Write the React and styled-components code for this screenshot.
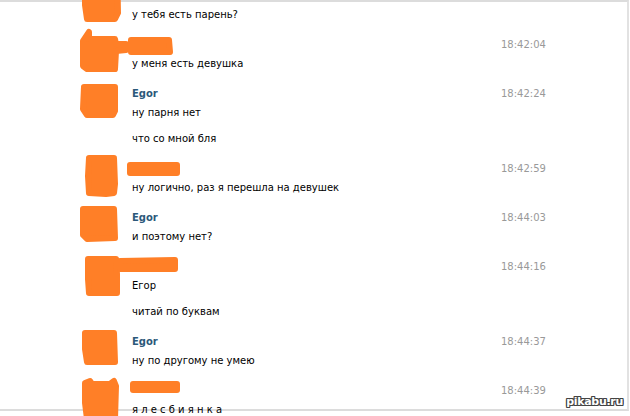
import React from "react";
import styled, { createGlobalStyle } from "styled-components";

const Global = createGlobalStyle`
  html, body {
    margin: 0;
    background: #fff;
  }
  body {
    font-family: "DejaVu Sans", Tahoma, sans-serif;
    font-size: 10px;
    color: #000;
  }
`;

const ORANGE = "#ff7f27";

// paint-over scribbles, coords relative to the avatar box
const AVATARS = {
  a: "M7 -22 L39 -22 L40 30 L37 36 L9 36 L7 22 Z",
  b: "M11 0 L11 7 L37 7 L38 12 L48 12 L48 18 L38 19 L37 37 L9 37 L5 34 L5 9 Z",
  c: "M6 6 L37 6 L37 30 L35 34 L9 34 L5 28 Z",
  d: "M11 2 L36 2 L37 28 L36 37 L28 38 L11 37 L10 20 Z",
  e: "M5 4 L36 4 L37 33 L9 34 L5 30 Z",
  f: "M10 5 L38 5 L39 20 L39 39 L11 39 L10 25 Z",
  g: "M7 4 L36 4 L37 33 L9 33 L7 20 Z",
  h: "M7 5 L12 3 L14 6 L32 6 L36 3 L38 8 L37 41 L9 41 L7 25 Z",
};

const NAMES = {
  b: "M-1 2 L37 2 L38 14 L-1 14 Z",
  d: "M-2 3 L45 3 L45 11 L-2 11 Z",
  f: "M-12 1 L43 0 L43 9 L-12 9 Z",
  h: "M1 0 L45 0 L45 6 L1 6 Z",
};

const Page = styled.div`
  height: 416px;
  overflow: hidden;
`;

const Frame = styled.div`
  position: relative;
  width: 627px;
  height: 407px;
  border-top: 2px solid #dcdcdc;
  border-right: 2px solid #e2e2e2;
  border-bottom: 2px solid #dcdcdc;
`;

const List = styled.div`
  margin-top: -21px;
`;

const Row = styled.div`
  display: flex;
  align-items: flex-start;
  padding: 8px 0 8px 78px;
`;

const AvatarBox = styled.svg`
  flex: none;
  width: 44px;
  height: 44px;
  margin: -6px 0 -40px;
  overflow: visible;
`;

const Body = styled.div`
  flex: 1;
  margin-left: 10px;
`;

const Author = styled.div`
  height: 14px;
  line-height: 14px;
  font-weight: bold;
  color: #2b587a;
`;

const NameMark = styled.svg`
  display: block;
  width: 40px;
  height: 14px;
  overflow: visible;
`;

const Text = styled.div`
  line-height: 14px;
  margin-top: ${(p) => (p.$first ? 5 : 12)}px;
`;

const Time = styled.div`
  flex: none;
  width: 126px;
  line-height: 14px;
  color: #999;
`;

const Watermark = styled.div`
  position: absolute;
  right: 4px;
  bottom: 1px;
  font-family: "DejaVu Sans", sans-serif;
  font-weight: bold;
  font-size: 11px;
  letter-spacing: -0.3px;
  color: #fff;
  text-shadow: 1px 0 #444, -1px 0 #444, 0 1px #444, 0 -1px #444,
    1px 1px #444, -1px -1px #444, 1px -1px #444, -1px 1px #444;
`;

const Paint = ({ d }) => (
  <path
    d={d}
    fill={ORANGE}
    stroke={ORANGE}
    strokeWidth="6"
    strokeLinejoin="round"
  />
);

const messages = [
  { id: "a", time: "", lines: ["у тебя есть парень?"] },
  { id: "b", time: "18:42:04", lines: ["у меня есть девушка"] },
  { id: "c", author: "Egor", time: "18:42:24", lines: ["ну парня нет", "что со мной бля"] },
  { id: "d", time: "18:42:59", lines: ["ну логично, раз я перешла на девушек"] },
  { id: "e", author: "Egor", time: "18:44:03", lines: ["и поэтому нет?"] },
  { id: "f", time: "18:44:16", lines: ["Егор", "читай по буквам"] },
  { id: "g", author: "Egor", time: "18:44:37", lines: ["ну по другому не умею"] },
  { id: "h", time: "18:44:39", lines: ["я л е с б и я н к а"] },
];

const Message = ({ m }) => (
  <Row>
    <AvatarBox viewBox="0 0 44 44">
      <Paint d={AVATARS[m.id]} />
    </AvatarBox>
    <Body>
      {m.author ? (
        <Author>{m.author}</Author>
      ) : (
        <NameMark viewBox="0 0 40 14">
          {NAMES[m.id] && <Paint d={NAMES[m.id]} />}
        </NameMark>
      )}
      {m.lines.map((l, i) => (
        <Text key={i} $first={i === 0}>
          {l}
        </Text>
      ))}
    </Body>
    <Time>{m.time}</Time>
  </Row>
);

export default function App() {
  return (
    <Page>
      <Global />
      <Frame>
        <List>
          {messages.map((m) => (
            <Message key={m.id} m={m} />
          ))}
        </List>
        <Watermark>pikabu.ru</Watermark>
      </Frame>
    </Page>
  );
}
